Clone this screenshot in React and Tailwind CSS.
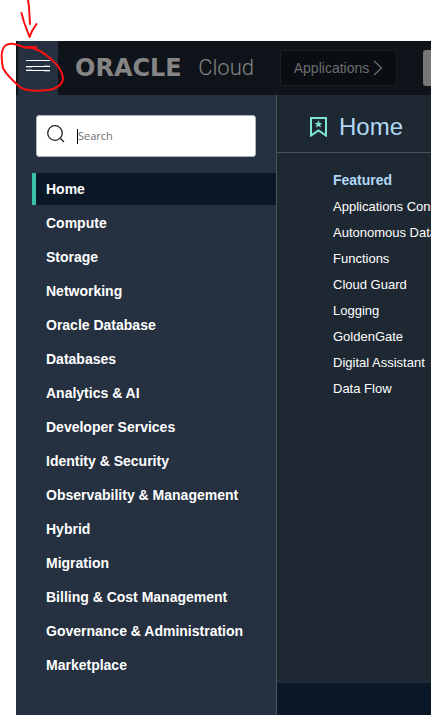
const categories = [
  "Home",
  "Compute",
  "Storage",
  "Networking",
  "Oracle Database",
  "Databases",
  "Analytics & AI",
  "Developer Services",
  "Identity & Security",
  "Observability & Management",
  "Hybrid",
  "Migration",
  "Billing & Cost Management",
  "Governance & Administration",
  "Marketplace",
];

const featured = [
  "Applications Console",
  "Autonomous Database",
  "Functions",
  "Cloud Guard",
  "Logging",
  "GoldenGate",
  "Digital Assistant",
  "Data Flow",
];

function Header() {
  return (
    <header className="flex h-[54px] shrink-0 items-stretch overflow-hidden bg-[#0f131a] pl-0.5">
      <button
        type="button"
        aria-label="Open navigation menu"
        className="flex w-10 shrink-0 items-center justify-center bg-[#253041] pb-1"
      >
        <svg width="24" height="14" viewBox="0 0 24 14" fill="none" aria-hidden="true">
          <path d="M0 1.500H24M0 7.500H24M0 11.500H24" stroke="#fff" />
          <path d="M0 8.500H6M18 6.500H24M0 10.500H6M18 12.500H24" stroke="#68717e" />
        </svg>
      </button>
      <a
        href="#home"
        className="ml-[17px] flex w-[179px] shrink-0 items-center justify-between text-[#858585]"
      >
        <span className="font-['DejaVu_Sans',sans-serif] text-2xl leading-none font-bold">ORACLE</span>
        <span className="font-['Roboto',sans-serif] text-[22px] leading-none font-light">Cloud</span>
      </a>
      <button
        type="button"
        className="ml-[26px] flex h-9 w-[117px] shrink-0 items-center justify-center gap-1 self-center rounded-[3px] border border-[#1c2025] bg-[#0a0d11] text-sm text-[#6d6e70]"
      >
        Applications
        <svg width="10" height="16" viewBox="0 0 10 16" fill="none" stroke="currentColor" strokeWidth="1.300" aria-hidden="true">
          <path d="M1 1L8.500 8L1 15" />
        </svg>
      </button>
      <button
        type="button"
        aria-label="Search resources"
        className="ml-[26px] h-9 w-40 shrink-0 self-center rounded-[3px] bg-[#777]"
      />
    </header>
  );
}

function Sidebar() {
  return (
    <aside className="w-[261px] shrink-0 border-r border-[#4a525c] bg-[#253041] pt-5">
      <label className="mx-5 flex h-[42px] items-center gap-3 rounded-[3px] border border-[#aab4bf] bg-white pl-2.5">
        <svg
          width="18"
          height="18"
          viewBox="0 0 18 18"
          fill="none"
          stroke="#222"
          strokeWidth="1.300"
          className="mb-1 shrink-0"
          aria-hidden="true"
        >
          <circle cx="8" cy="8" r="7.300" />
          <path d="M13 13L17 17" />
        </svg>
        <span className="flex min-w-0 grow items-center">
          <span className="h-[15px] w-px shrink-0 bg-black" />
          <input
            type="text"
            aria-label="Search"
            placeholder="Search"
            className="w-full min-w-0 bg-transparent font-['Open_Sans',sans-serif] text-[11px] text-black outline-none placeholder:text-[#6b7078]"
          />
        </span>
      </label>
      <nav aria-label="Categories" className="mt-4 ml-4 flex flex-col gap-0.5">
        {categories.map((name, i) => (
          <a
            key={name}
            href="#category"
            className={
              i === 0
                ? "flex h-8 items-center border-l-4 border-[#3bc2a5] bg-[#0a1726] pl-2.5 text-sm font-bold text-white"
                : "flex h-8 items-center border-l-4 border-transparent pl-2.5 text-sm font-bold text-white"
            }
          >
            {name}
          </a>
        ))}
      </nav>
    </aside>
  );
}

function Content() {
  return (
    <main className="flex min-w-0 grow flex-col overflow-hidden bg-[#1e2832]">
      <div className="flex h-[58px] shrink-0 items-center gap-3 border-b border-[#4a525c] pt-1.5 pl-[33px]">
        <svg width="17" height="20" viewBox="0 0 17 20" fill="none" aria-hidden="true">
          <path d="M1 1H16V18.500L8.500 13.500L1 18.500Z" stroke="#7fe5d3" strokeWidth="2" />
          <path
            d="M8.500 3L9.600 6H12.300L10.200 7.800L11 10.500L8.500 9L6 10.500L6.800 7.800L4.700 6H7.400Z"
            fill="#7fe5d3"
          />
        </svg>
        <h1 className="text-2xl text-[#b1d8f7]">Home</h1>
      </div>
      <section className="grow pt-[14px] pl-14">
        <h2 className="text-sm leading-[26px] font-bold text-[#b1d8f7]">Featured</h2>
        <ul className="pt-px text-[13px] leading-[26px] whitespace-nowrap text-white">
          {featured.map((name) => (
            <li key={name}>
              <a href="#service">{name}</a>
            </li>
          ))}
        </ul>
      </section>
      <footer className="h-8 shrink-0 bg-[#0a1726]" />
    </main>
  );
}

function MenuCallout() {
  return (
    <svg
      width="70"
      height="96"
      viewBox="0 0 70 96"
      fill="none"
      stroke="#fa1010"
      strokeWidth="2"
      strokeLinecap="round"
      strokeLinejoin="round"
      className="pointer-events-none absolute top-0 left-0"
      aria-hidden="true"
    >
      <path d="M28 0L29 7L30 24M21.500 13L24 22L29.500 37L32 31L36.500 24" />
      <path d="M27 47H36M27 48L14 44Q7 43 4 47C1 51 1 58 3 68C6 74 13 81 20 87C25 91 38 91 48 90C57 89 63 84 63 78C62 72 59 66 53 61C47 55 40 50 32 48L27 47.500" />
    </svg>
  );
}

export default function App() {
  return (
    <div className="relative flex min-h-screen flex-col overflow-hidden bg-white pt-[41px] pl-4 font-['Liberation_Sans',Arial,sans-serif]">
      <Header />
      <div className="flex grow">
        <Sidebar />
        <Content />
      </div>
      <MenuCallout />
    </div>
  );
}
